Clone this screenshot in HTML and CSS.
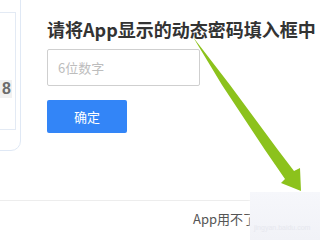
FILE: index.html
```html
<!DOCTYPE html>
<html lang="zh">
<head>
<meta charset="utf-8">
<link rel="stylesheet" href="styles.css">
</head>
<body>
<div class="page">
  <div class="main">
    <div class="card">
      <div class="inner">
        <span class="digit">8</span>
      </div>
    </div>
    <div class="content">
      <h1 class="title">请将App显示的动态密码填入框中</h1>
      <div class="input">6位数字</div>
      <div class="btn">确定</div>
    </div>
  </div>
  <div class="footer">App用不了</div>
  <div class="mask"><span class="wm">jingyan.baidu.com</span></div>
  <svg class="arrow" width="320" height="240" viewBox="0 0 320 240">
    <polygon points="193,37 230,85 278,150 294,171 300,168 301,191 281,183 285,179 265,150 222,85" fill="#8cc21c"/>
  </svg>
</div>
</body>
</html>
```
FILE: styles.css
```css
html, body {
  margin: 0;
  padding: 0;
  background: #fff;
}
.page {
  position: relative;
  width: 320px;
  height: 240px;
  overflow: hidden;
  font-family: "Noto Sans CJK SC", "Liberation Sans", sans-serif;
}
.main {
  display: flex;
  height: 201px;
  border-bottom: 1px solid #ededed;
  box-sizing: border-box;
}
.card {
  box-sizing: border-box;
  flex: none;
  width: 51px;
  height: 161px;
  margin-left: -30px;
  margin-top: -10px;
  border: 1px solid #dfe8f5;
  border-radius: 10px;
  padding: 21px 4px 20px 0;
  display: flex;
}
.inner {
  flex: 1;
  border: 1px solid #e3eaf4;
  display: flex;
  flex-direction: column;
  align-items: flex-end;
  padding-top: 67px;
  padding-right: 3px;
}
.digit {
  display: block;
  width: 30px;
  height: 18px;
  background: #f1f1f1;
  color: #6b6b6b;
  font-family: "Liberation Sans", sans-serif;
  font-weight: bold;
  font-size: 16px;
  line-height: 18px;
  text-align: right;
  padding-right: 1px;
}
.content {
  margin-left: 26px;
  display: flex;
  flex-direction: column;
  align-items: flex-start;
}
.title {
  margin: 19px 0 0 0;
  font-size: 18px;
  line-height: 20px;
  font-weight: bold;
  color: #333;
  white-space: nowrap;
}
.input {
  box-sizing: border-box;
  margin-top: 10px;
  width: 153px;
  height: 37px;
  border: 1px solid #cfcfcf;
  border-radius: 2px;
  padding-left: 10px;
  font-size: 13px;
  line-height: 35px;
  color: #bdbdbd;
}
.btn {
  margin-top: 14px;
  width: 80px;
  height: 33px;
  background: #3385f7;
  border-radius: 2px;
  color: #fff;
  font-size: 13px;
  line-height: 33px;
  text-align: center;
}
.footer {
  padding-left: 193px;
  margin-top: 9px;
  font-size: 13px;
  line-height: 18px;
  color: #555;
  white-space: nowrap;
}
.mask {
  position: absolute;
  left: 250px;
  top: 192px;
  width: 70px;
  height: 48px;
  background: linear-gradient(#f6f7fb, #f1f2f7);
  box-shadow: 0 -2px 3px rgba(255,255,255,0.8);
}
.wm {
  position: absolute;
  left: 4px;
  top: 32px;
  font-size: 7px;
  color: #e6e7ee;
  white-space: nowrap;
  font-family: "Liberation Sans", sans-serif;
}
.arrow {
  position: absolute;
  left: 0;
  top: 0;
}
```
